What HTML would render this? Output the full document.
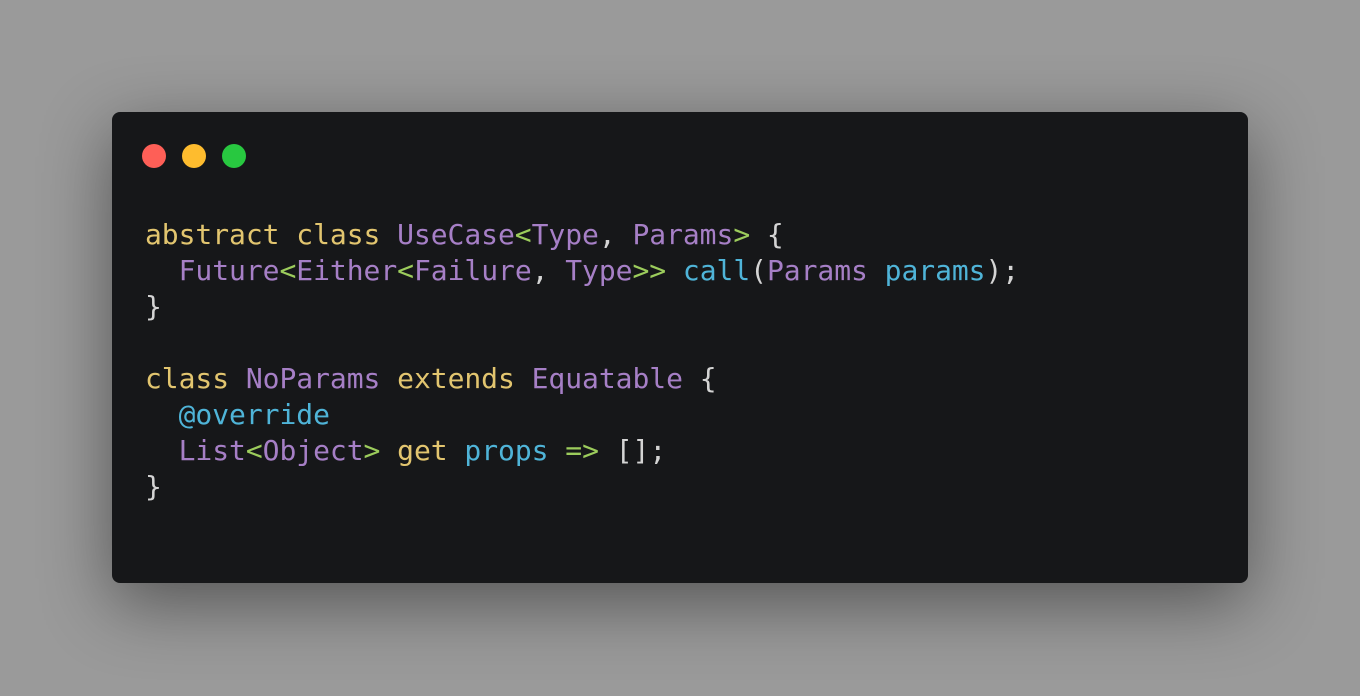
<!DOCTYPE html>
<html><head><style>
html,body{margin:0;padding:0}
body{width:1360px;height:696px;background:#9a9a9a;position:relative;overflow:hidden;font-family:"DejaVu Sans Mono","Liberation Mono",monospace}
.win{position:absolute;left:112px;top:112px;width:1136px;height:471px;background:#161719;border-radius:8px;box-shadow:0 20px 70px rgba(0,0,0,0.45)}
.d{position:absolute;top:32px;width:24px;height:24px;border-radius:50%}
pre{position:absolute;left:33px;top:105px;margin:0;font-family:inherit;font-size:28px;line-height:36px;color:#d4d4d4;letter-spacing:-0.05px}
.k{color:#e2c56f}.t{color:#a67fc6}.g{color:#9ccc5c}.b{color:#4fb4d8}
</style></head><body>
<div class="win">
<div class="d" style="left:30px;background:#fe5f57"></div>
<div class="d" style="left:70px;background:#febc2e"></div>
<div class="d" style="left:110px;background:#28c840"></div>
<pre><span class="k">abstract class</span> <span class="t">UseCase</span><span class="g">&lt;</span><span class="t">Type</span>, <span class="t">Params</span><span class="g">&gt;</span> {
  <span class="t">Future</span><span class="g">&lt;</span><span class="t">Either</span><span class="g">&lt;</span><span class="t">Failure</span>, <span class="t">Type</span><span class="g">&gt;&gt;</span> <span class="b">call</span>(<span class="t">Params</span> <span class="b">params</span>);
}

<span class="k">class</span> <span class="t">NoParams</span> <span class="k">extends</span> <span class="t">Equatable</span> {
  <span class="b">@override</span>
  <span class="t">List</span><span class="g">&lt;</span><span class="t">Object</span><span class="g">&gt;</span> <span class="k">get</span> <span class="b">props</span> <span class="g">=&gt;</span> [];
}</pre>
</div>
</body></html>
